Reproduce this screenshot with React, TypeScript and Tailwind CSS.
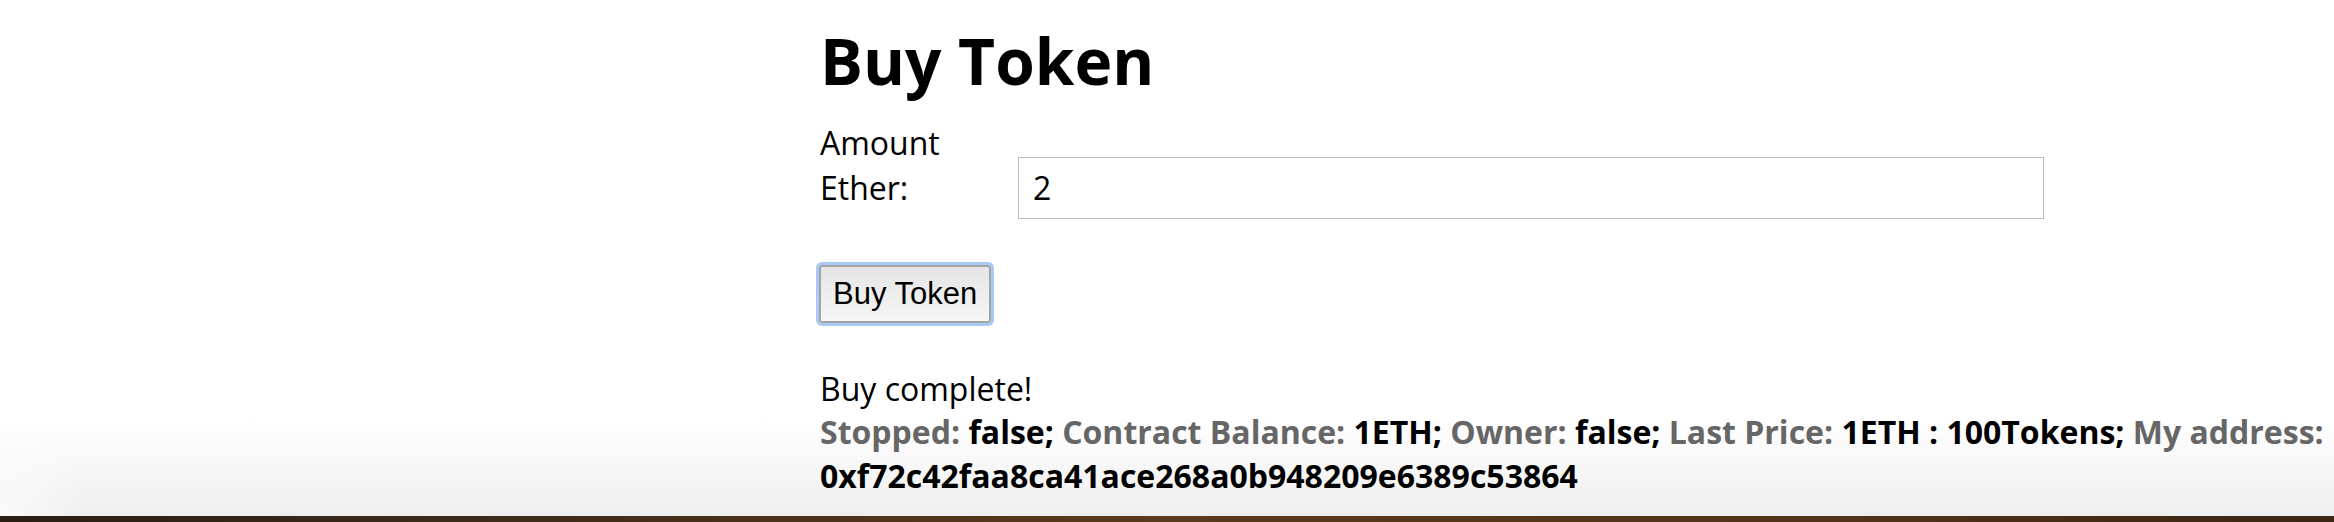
import React from 'react';

const STATS = [
  { label: 'Stopped:', value: 'false;' },
  { label: 'Contract Balance:', value: '1ETH;' },
  { label: 'Owner:', value: 'false;' },
  { label: 'Last Price:', value: '1ETH : 100Tokens;' },
  { label: 'My address:', value: '0xf72c42faa8ca41ace268a0b948209e6389c53864' },
];

function BuyForm() {
  return (
    <>
      <div className="mt-[16px] text-[32px] leading-[45px]">
        <label htmlFor="amount" className="inline-block w-[198px] align-baseline">
          Amount Ether:
        </label>
        <input
          id="amount"
          type="text"
          defaultValue="2"
          className="inline-block align-baseline w-[1026px] h-[62px] border border-[#bdbdbd] bg-white px-[14px] text-[32px] leading-[44px] text-black outline-none"
        />
      </div>
      <button
        type="button"
        className="block mt-[46px] ml-[-1px] h-[58px] px-[12px] rounded-[3px] border-2 border-[#a4a4a4] bg-linear-to-b from-[#e5e5e5] to-[#f6f6f6] ring-[3px] ring-[#a8c9f4] font-['Liberation_Sans',Arial,sans-serif] text-[31px] leading-[34px] text-black"
      >
        Buy Token
      </button>
    </>
  );
}

function Status() {
  return (
    <div className="mt-[44px] text-[32px] leading-[43.5px]">
      <div>Buy complete!</div>
      <div className="font-bold">
        {STATS.map((s) => (
          <React.Fragment key={s.label}>
            <span className="text-[#666666]">{s.label}</span> <span className="text-black">{s.value}</span>{' '}
          </React.Fragment>
        ))}
      </div>
    </div>
  );
}

export default function App() {
  return (
    <div className="w-[2334px] h-[522px] flex flex-col overflow-hidden font-['Open_Sans',sans-serif] text-black bg-[image:radial-gradient(ellipse_90px_110px_at_0%_100%,rgba(255,255,255,0.7),transparent),linear-gradient(to_bottom,#ffffff_0%,#ffffff_80%,#eeeeee_100%)]">
      <main className="flex-1 pl-[820px] pt-[17px]">
        <h1 className="text-[64px] leading-[87px] font-bold">Buy Token</h1>
        <BuyForm />
        <Status />
      </main>
      <div className="h-[6px] shrink-0 bg-[linear-gradient(to_right,#2a1e15,#3d2a1a_20%,#5a3a1c_50%,#4f3219_80%,#3a2514)]" />
    </div>
  );
}
